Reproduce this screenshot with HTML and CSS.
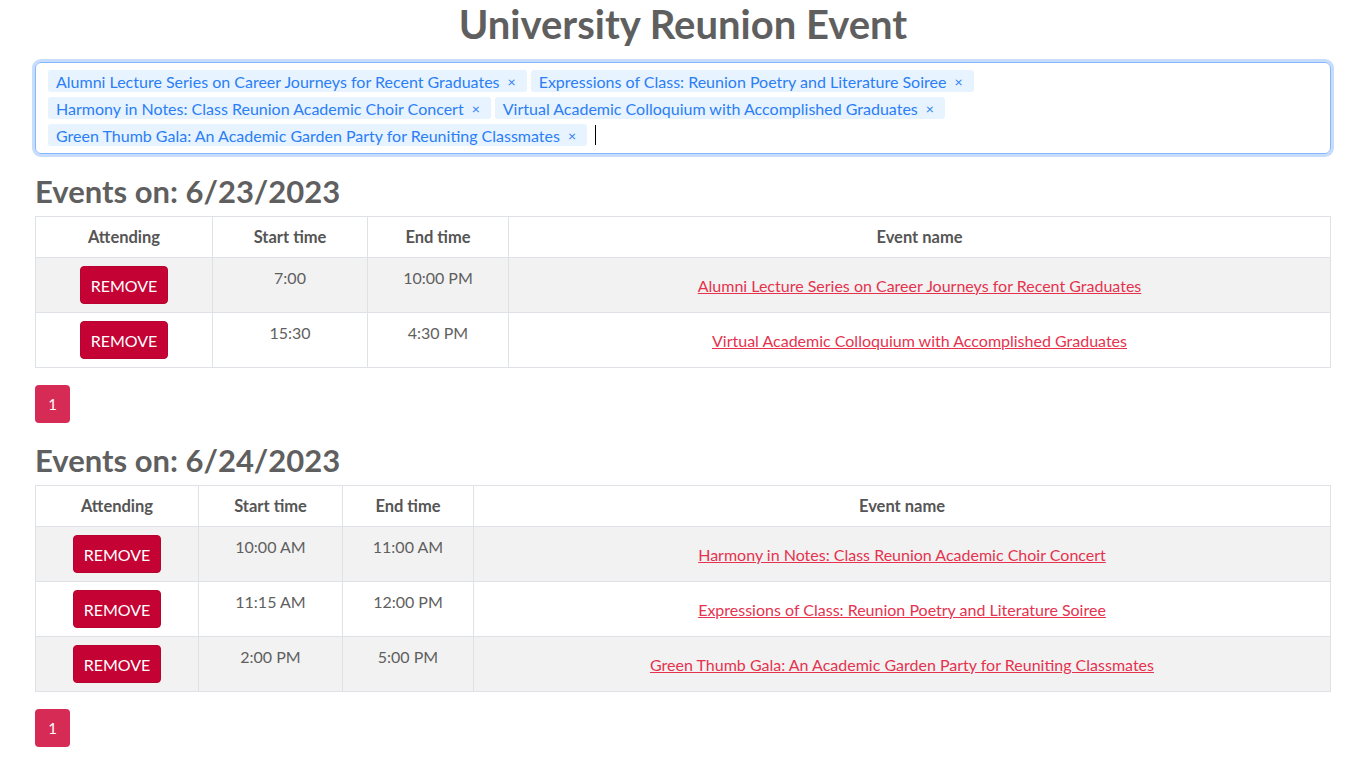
FILE: index.html
```html
<!DOCTYPE html>
<html>
<head>
<meta charset="utf-8">
<link rel="stylesheet" href="styles.css">
</head>
<body>
<div class="container">
  <h1 class="title">University Reunion Event</h1>
  <div class="tag-input">
    <span class="tag">Alumni Lecture Series on Career Journeys for Recent Graduates<span class="x">×</span></span>
    <span class="tag">Expressions of Class: Reunion Poetry and Literature Soiree<span class="x">×</span></span>
    <span class="tag">Harmony in Notes: Class Reunion Academic Choir Concert<span class="x">×</span></span>
    <span class="tag">Virtual Academic Colloquium with Accomplished Graduates<span class="x">×</span></span>
    <span class="tag">Green Thumb Gala: An Academic Garden Party for Reuniting Classmates<span class="x">×</span></span>
    <span class="caret"></span>
  </div>

  <h2 class="day">Events on: 6/23/2023</h2>
  <table class="events t1">
    <thead>
      <tr><th class="c-att">Attending</th><th class="c-start">Start time</th><th class="c-end">End time</th><th>Event name</th></tr>
    </thead>
    <tbody>
      <tr>
        <td class="att"><button class="remove">REMOVE</button></td>
        <td class="time">7:00</td>
        <td class="time">10:00 PM</td>
        <td class="name"><a href="#">Alumni Lecture Series on Career Journeys for Recent Graduates</a></td>
      </tr>
      <tr>
        <td class="att"><button class="remove">REMOVE</button></td>
        <td class="time">15:30</td>
        <td class="time">4:30 PM</td>
        <td class="name"><a href="#">Virtual Academic Colloquium with Accomplished Graduates</a></td>
      </tr>
    </tbody>
  </table>
  <div class="pager"><span class="page">1</span></div>

  <h2 class="day">Events on: 6/24/2023</h2>
  <table class="events t2">
    <thead>
      <tr><th class="c-att">Attending</th><th class="c-start">Start time</th><th class="c-end">End time</th><th>Event name</th></tr>
    </thead>
    <tbody>
      <tr>
        <td class="att"><button class="remove">REMOVE</button></td>
        <td class="time">10:00 AM</td>
        <td class="time">11:00 AM</td>
        <td class="name"><a href="#">Harmony in Notes: Class Reunion Academic Choir Concert</a></td>
      </tr>
      <tr>
        <td class="att"><button class="remove">REMOVE</button></td>
        <td class="time">11:15 AM</td>
        <td class="time">12:00 PM</td>
        <td class="name"><a href="#">Expressions of Class: Reunion Poetry and Literature Soiree</a></td>
      </tr>
      <tr>
        <td class="att"><button class="remove">REMOVE</button></td>
        <td class="time">2:00 PM</td>
        <td class="time">5:00 PM</td>
        <td class="name"><a href="#">Green Thumb Gala: An Academic Garden Party for Reuniting Classmates</a></td>
      </tr>
    </tbody>
  </table>
  <div class="pager"><span class="page">1</span></div>
</div>
</body>
</html>
```

FILE: styles.css
```css
* { box-sizing: border-box; }
body {
  margin: 0;
  font-family: "Lato", "Noto Sans", sans-serif;
  color: #5f5f5f;
  background: #fff;
}
.container {
  padding: 0 40px 0 35px;
}
.title {
  margin: 0;
  padding-top: 1px;
  text-align: center;
  font-size: 40px;
  font-weight: 700;
  line-height: 46px;
  color: #5f5f5f;
}
.tag-input {
  margin-top: 15px;
  border: 1px solid #86b7fe;
  border-radius: 6px;
  box-shadow: 0 0 0 3px #c6ddfe;
  padding: 7px 12px 7px 12px;
  display: flex;
  flex-wrap: wrap;
  align-items: center;
  gap: 5px 4px;
  min-height: 92px;
  align-content: flex-start;
}
.tag {
  display: inline-flex;
  align-items: center;
  height: 22px;
  padding: 0 11px 0 8px;
  background: #e7f3ff;
  color: #2b7ef5;
  font-size: 16px;
  border-radius: 3px;
  white-space: nowrap;
}
.tag .x {
  margin-left: 8px;
  font-size: 14px;
}
.caret {
  display: inline-block;
  width: 1px;
  height: 20px;
  background: #000;
  margin-left: 4px;
}
.day {
  margin: 19px 0 7px;
  font-size: 31px;
  font-weight: 700;
  line-height: 36px;
  color: #5f5f5f;
}
.events {
  width: 100%;
  border-collapse: collapse;
  table-layout: fixed;
  font-size: 16px;
}
.t1 .c-att { width: 177px; }
.t1 .c-start { width: 155px; }
.t1 .c-end { width: 141px; }
.t2 .c-att { width: 163px; }
.t2 .c-start { width: 144px; }
.t2 .c-end { width: 131px; }
.events th, .events td {
  border: 1px solid #dee2e6;
  text-align: center;
}
.events th {
  height: 41px;
  font-weight: 700;
  font-size: 16.5px;
  color: #555;
  padding: 0 8px;
}
.events tbody tr:nth-child(odd) { background: #f2f2f2; }
.events td {
  height: 55px;
  padding: 0 8px;
}
.events td.time {
  vertical-align: top;
  padding-top: 10px;
  color: #5f5f5f;
}
.events td.att, .events td.name { vertical-align: middle; }
.remove {
  font-family: inherit;
  font-size: 16px;
  color: #fff;
  background: #c40233;
  border: 1px solid #b80230;
  border-radius: 4px;
  width: 88px;
  height: 38px;
  padding: 0;
  cursor: pointer;
}
.name a {
  color: #e5334f;
  text-decoration: underline;
}
.pager {
  margin-top: 17px;
  margin-bottom: 1px;
  display: flex;
}
.page {
  display: inline-flex;
  align-items: center;
  justify-content: center;
  width: 35px;
  height: 38px;
  background: #d52b54;
  color: #fff;
  font-size: 15px;
  border-radius: 4px;
}
```
